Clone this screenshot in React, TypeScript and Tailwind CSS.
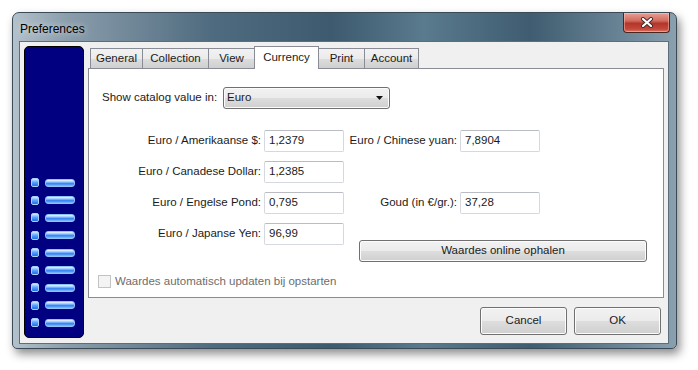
const ui = "font-['Segoe_UI','Liberation_Sans',Arial,sans-serif] text-[11.5px] text-[#1b1b1b]";

const tabs = [
  { label: 'General', w: 'w-[53px]' },
  { label: 'Collection', w: 'w-[67px]' },
  { label: 'View', w: 'w-[47px]' },
  { label: 'Currency', w: 'w-[65px]', active: true },
  { label: 'Print', w: 'w-[47px]' },
  { label: 'Account', w: 'w-[55px]' },
];

function SideIcon() {
  return (
    <div className="flex h-[9px] items-center gap-[6px]">
      <span className="h-[9px] w-[8px] rounded-[2px] border border-[#a9d0ff] bg-[linear-gradient(180deg,#d6eaff_0%,#5ea6ff_45%,#1c6de6_100%)]" />
      <span className="h-[8px] w-[30px] rounded-[3px] border border-[#8cc2ff] bg-[linear-gradient(180deg,#f0f7ff_0%,#9ccbff_30%,#2f7ef2_62%,#86bfff_100%)]" />
    </div>
  );
}

function Sidebar() {
  return (
    <div className="flex h-[292px] w-[60px] shrink-0 flex-col justify-end gap-[8.5px] rounded-[5px] border border-black bg-[#000080] pb-[10px] pl-[6px]">
      {Array.from({ length: 9 }).map((_, i) => (
        <SideIcon key={i} />
      ))}
    </div>
  );
}

function TextBox({ value }: { value: string }) {
  return (
    <div className="flex h-[22px] w-[80px] shrink-0 items-center rounded-[2px] border border-[#d5d8de] border-t-[#b9bcc3] bg-white pl-[4px]">
      {value}
    </div>
  );
}

function Win7Button({ children, className }: { children: React.ReactNode; className: string }) {
  return (
    <div
      className={`flex items-center justify-center rounded-[3px] border border-[#707070] bg-[linear-gradient(180deg,#f2f2f2_0%,#ebebeb_48%,#dddddd_52%,#cfcfcf_100%)] shadow-[inset_0_0_0_1px_#fcfcfc] ${className}`}
    >
      {children}
    </div>
  );
}

function Label({ text, w }: { text: string; w: string }) {
  return <div className={`${w} shrink-0 whitespace-nowrap pr-[3px] text-right`}>{text}</div>;
}

function CloseButton() {
  return (
    <div className="mr-[6px] flex h-[20px] w-[47px] items-center justify-center rounded-b-[4px] border border-t-0 border-[#4a2620] bg-[linear-gradient(180deg,#e7a197_0%,#d36b5e_40%,#b4362a_55%,#c4493b_85%,#dc7a6c_100%)] shadow-[inset_0_0_0_1px_rgba(255,210,200,0.45)]">
      <svg width="14" height="11" viewBox="0 0 14 11" aria-hidden="true">
        <path d="M3 2 11 9M11 2 3 9" stroke="#3a2a2a" strokeWidth="4" strokeLinecap="round" />
        <path d="M3 2 11 9M11 2 3 9" stroke="#ffffff" strokeWidth="2.2" strokeLinecap="round" />
      </svg>
    </div>
  );
}

function CurrencyPanel() {
  return (
    <div className="h-[230px] border border-[#898c95] bg-white">
      <div className="mt-[18px] flex items-center pl-[13px]">
        <div className="w-[121px] shrink-0 whitespace-nowrap">Show catalog value in:</div>
        <div className="flex h-[22px] w-[167px] items-center justify-between rounded-[3px] border border-[#707070] bg-[linear-gradient(180deg,#f2f2f2_0%,#ebebeb_48%,#dddddd_52%,#cfcfcf_100%)] pl-[3px] pr-[5px] shadow-[inset_0_0_0_1px_#fbfbfb]">
          <span>Euro</span>
          <svg width="8" height="5" viewBox="0 0 8 5" aria-hidden="true">
            <path d="M0 0h7L3.5 4z" fill="#111" />
          </svg>
        </div>
      </div>

      <div className="mt-[21px] flex flex-col gap-[9px]">
        <div className="flex items-center">
          <Label text="Euro / Amerikaanse $:" w="w-[175px]" />
          <TextBox value="1,2379" />
          <Label text="Euro / Chinese yuan:" w="w-[116px]" />
          <TextBox value="7,8904" />
        </div>
        <div className="flex items-center">
          <Label text="Euro / Canadese Dollar:" w="w-[175px]" />
          <TextBox value="1,2385" />
        </div>
        <div className="flex items-center">
          <Label text="Euro / Engelse Pond:" w="w-[175px]" />
          <TextBox value="0,795" />
          <Label text="Goud (in €/gr.):" w="w-[116px]" />
          <TextBox value="37,28" />
        </div>
        <div className="flex items-start">
          <div className="flex items-center">
            <Label text="Euro / Japanse Yen:" w="w-[175px]" />
            <TextBox value="96,99" />
          </div>
          <Win7Button className="ml-[15px] mt-[17px] h-[22px] w-[288px]">Waardes online ophalen</Win7Button>
        </div>
      </div>

      <div className="mt-[11px] flex items-center gap-[4px] pl-[9px] text-[#6d6d6d]">
        <span className="h-[13px] w-[13px] border border-[#c3c3c3] bg-[#f4f4f4]" />
        <span>Waardes automatisch updaten bij opstarten</span>
      </div>
    </div>
  );
}

export default function App() {
  return (
    <div className={`h-[370px] w-[698px] bg-white pl-[12px] pt-[12px] ${ui}`}>
      <div className="flex h-[337px] w-[665px] flex-col rounded-t-[7px] rounded-b-[5px] border border-[#3a4a57] bg-[linear-gradient(90deg,#b3c1cb_0%,#8b9eac_8%,#4f6b7f_30%,#3d5a6e_48%,#5a7a8e_62%,#3f5c70_78%,#6a8596_92%,#8aa0ae_100%)] shadow-[3px_5px_10px_rgba(0,0,0,0.45)]">
        <div className="flex h-[28px] items-start justify-between">
          <div className="pl-[7px] pt-[7px] text-[12px] text-black [text-shadow:0_0_6px_rgba(255,255,255,0.8)]">
            Preferences
          </div>
          <CloseButton />
        </div>
        <div className="ml-[6px] mr-[7px] flex h-[303px] gap-[4px] border border-[#5d6e7b] bg-[#f0f0f0] pl-[4px] pr-[4px] pt-[4px]">
          <Sidebar />
          <div className="flex flex-1 flex-col">
            <div className="flex h-[22px] items-end pl-[2px]">
              {tabs.map((t, i) =>
                t.active ? (
                  <div
                    key={t.label}
                    className={`relative z-10 -mb-px -ml-px flex h-[23px] ${t.w} justify-center border border-b-0 border-[#898c95] bg-white pt-[2px]`}
                  >
                    {t.label}
                  </div>
                ) : (
                  <div
                    key={t.label}
                    className={`flex h-[20px] ${t.w} ${i === 0 ? '' : '-ml-px'} items-center justify-center border border-b-0 border-[#898c95] bg-[linear-gradient(180deg,#f2f2f2_0%,#ebebeb_50%,#dddddd_51%,#cfcfcf_100%)]`}
                  >
                    {t.label}
                  </div>
                ),
              )}
            </div>
            <CurrencyPanel />
            <div className="mt-[9px] flex justify-end gap-[7px] pr-[3px]">
              <Win7Button className="h-[28px] w-[87px]">Cancel</Win7Button>
              <Win7Button className="h-[28px] w-[87px]">OK</Win7Button>
            </div>
          </div>
        </div>
      </div>
    </div>
  );
}
